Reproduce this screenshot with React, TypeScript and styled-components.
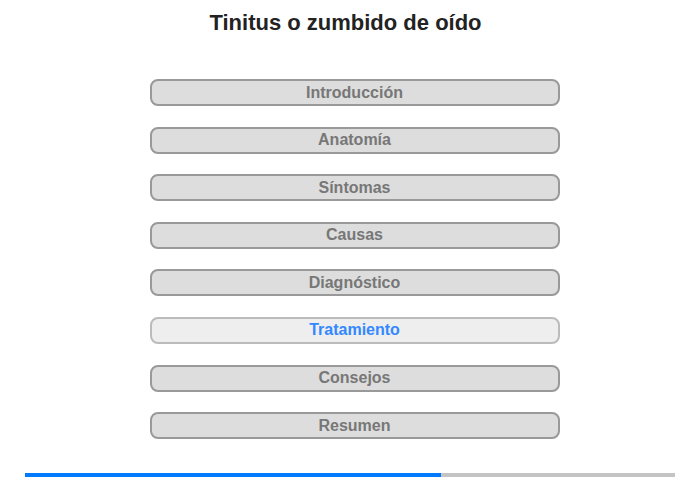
import React from "react"
import styled, { createGlobalStyle } from "styled-components"

const sections = [
  "Introducción",
  "Anatomía",
  "Síntomas",
  "Causas",
  "Diagnóstico",
  "Tratamiento",
  "Consejos",
  "Resumen",
]

const current = 5
const progress = 64

const GlobalStyle = createGlobalStyle`
  html, body {
    margin: 0;
    padding: 0;
    background: #fff;
    font-family: "Liberation Sans", Arial, sans-serif;
  }
`

const Page = styled.div`
  width: 700px;
  height: 480px;
  display: flex;
  flex-direction: column;
  align-items: center;
`

const Title = styled.h1`
  margin: 10px 0 0 -9px;
  font-size: 22px;
  line-height: 26px;
  font-weight: bold;
  color: #222;
`

const Menu = styled.nav`
  margin: 43px 0 0 9px;
  display: flex;
  flex-direction: column;
  gap: 20.6px;
`

const Item = styled.div<{ $active?: boolean }>`
  box-sizing: border-box;
  width: 410px;
  height: 27px;
  border: 2px solid ${p => (p.$active ? "#bbb" : "#999")};
  border-radius: 8px;
  background: ${p => (p.$active ? "#eee" : "#ddd")};
  color: ${p => (p.$active ? "#3388ff" : "#777")};
  font-size: 16px;
  font-weight: bold;
  display: flex;
  align-items: center;
  justify-content: center;
  cursor: pointer;
`

const Track = styled.div`
  margin-top: 34px;
  width: 650px;
  height: 4px;
  background: #c4c4c4;
`

const Fill = styled.div`
  height: 100%;
  background: #007bff;
`

export default function App() {
  return (
    <Page>
      <GlobalStyle />
      <Title>Tinitus o zumbido de oído</Title>
      <Menu>
        {sections.map((s, i) => (
          <Item key={s} $active={i === current}>
            {s}
          </Item>
        ))}
      </Menu>
      <Track>
        <Fill style={{ width: `${progress}%` }} />
      </Track>
    </Page>
  )
}
